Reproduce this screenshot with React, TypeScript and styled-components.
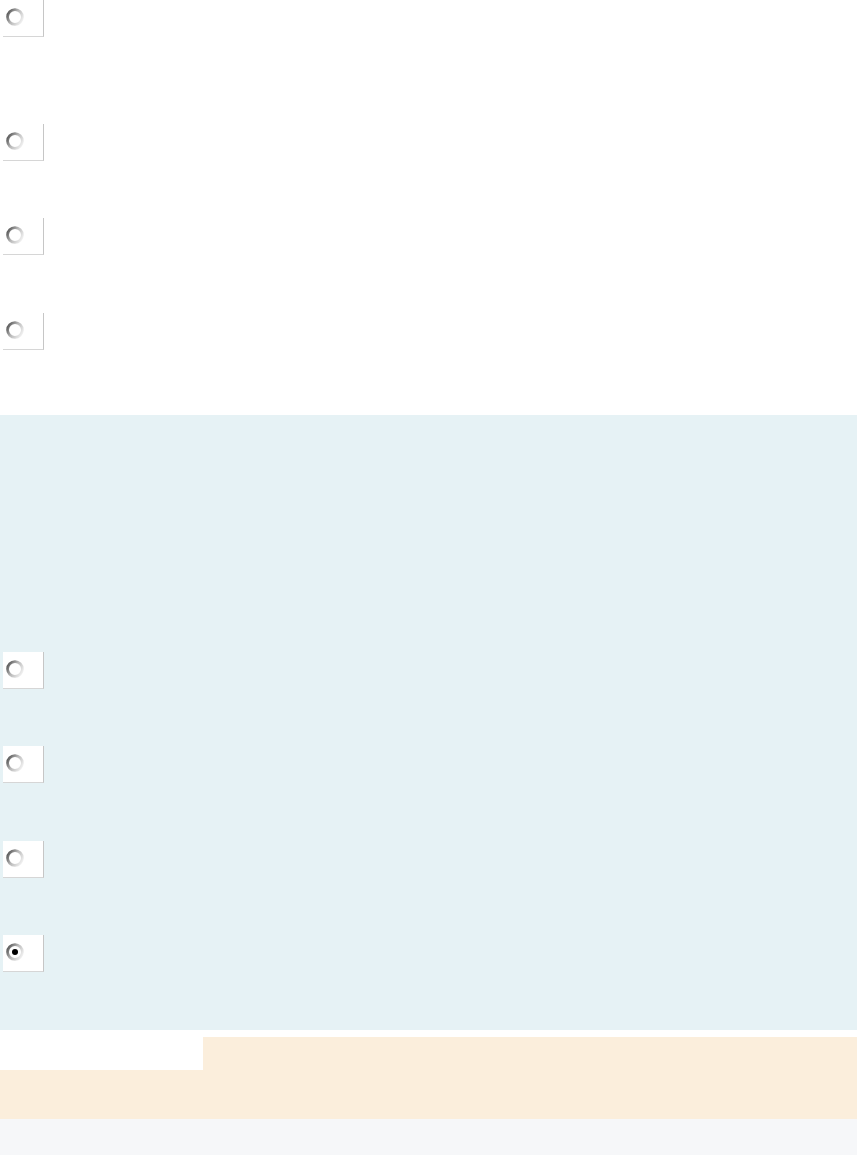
import styled, { createGlobalStyle } from 'styled-components';

const GlobalStyle = createGlobalStyle`
  body {
    margin: 0;
    background: #ffffff;
    font-family: 'Liberation Sans', Arial, sans-serif;
  }
`;

const Page = styled.div`
  width: 857px;
  display: flex;
  flex-direction: column;
`;

const Section = styled.section<{ $tint?: boolean; $padTop?: number; $padBottom?: number }>`
  display: flex;
  flex-direction: column;
  background: ${({ $tint }) => ($tint ? '#e6f2f5' : '#ffffff')};
  padding-top: ${({ $padTop }) => $padTop ?? 0}px;
  padding-bottom: ${({ $padBottom }) => $padBottom ?? 0}px;
`;

const OptionRow = styled.div<{ $height: number }>`
  height: ${({ $height }) => $height}px;
  display: flex;
  align-items: flex-start;
`;

const RadioBox = styled.label`
  margin-left: 3px;
  width: 41px;
  height: 37px;
  background: #ffffff;
  border-right: 1px solid #c6c6c6;
  border-bottom: 1px solid #d6d6d6;
  display: flex;
  align-items: flex-start;
  padding: 7px 0 0 2px;
  box-sizing: border-box;
  cursor: pointer;
`;

const Spacer = styled.div`
  height: 7px;
  background: #ffffff;
`;

const Notice = styled.div`
  background: #fbeedc;
  display: flex;
  flex-direction: column;
  height: 82px;
`;

const NoticeTab = styled.div`
  width: 203px;
  height: 33px;
  background: #ffffff;
`;

const Bottom = styled.div`
  background: #f6f7f9;
  height: 40px;
`;

const Radio = ({ checked, id }: { checked?: boolean; id: string }) => (
  <svg width='20' height='20' viewBox='0 0 20 20'>
    <defs>
      <linearGradient id={`ring-${id}`} x1='0' y1='0.2' x2='1' y2='0.8'>
        <stop offset='0' stopColor='#5a5a5a' />
        <stop offset='0.45' stopColor='#b8b8b8' />
        <stop offset='1' stopColor='#f2f2f2' />
      </linearGradient>
      <filter id={`soft-${id}`} x='-20%' y='-20%' width='140%' height='140%'>
        <feGaussianBlur stdDeviation='0.5' />
      </filter>
    </defs>
    <g filter={`url(#soft-${id})`}>
      <circle cx='10' cy='10' r='7.4' fill='#ffffff' stroke={`url(#ring-${id})`} strokeWidth='2.8' />
      {checked && <circle cx='10' cy='10' r='3' fill='#000000' />}
    </g>
  </svg>
);

const Option = ({ height, checked, id }: { height: number; checked?: boolean; id: string }) => (
  <OptionRow $height={height}>
    <RadioBox>
      <Radio id={id} checked={checked} />
    </RadioBox>
  </OptionRow>
);

const App = () => {
  const firstQuestion = [124, 94, 95, 95];
  const secondQuestion = [94, 95, 94, 95];

  return (
    <Page>
      <GlobalStyle />
      <Section $padBottom={7}>
        {firstQuestion.map((h, i) => (
          <Option key={i} id={`a${i}`} height={h} />
        ))}
      </Section>
      <Section $tint $padTop={237}>
        {secondQuestion.map((h, i) => (
          <Option key={i} id={`b${i}`} height={h} checked={i === 3} />
        ))}
      </Section>
      <Spacer />
      <Notice>
        <NoticeTab />
      </Notice>
      <Bottom />
    </Page>
  );
};

export default App;
